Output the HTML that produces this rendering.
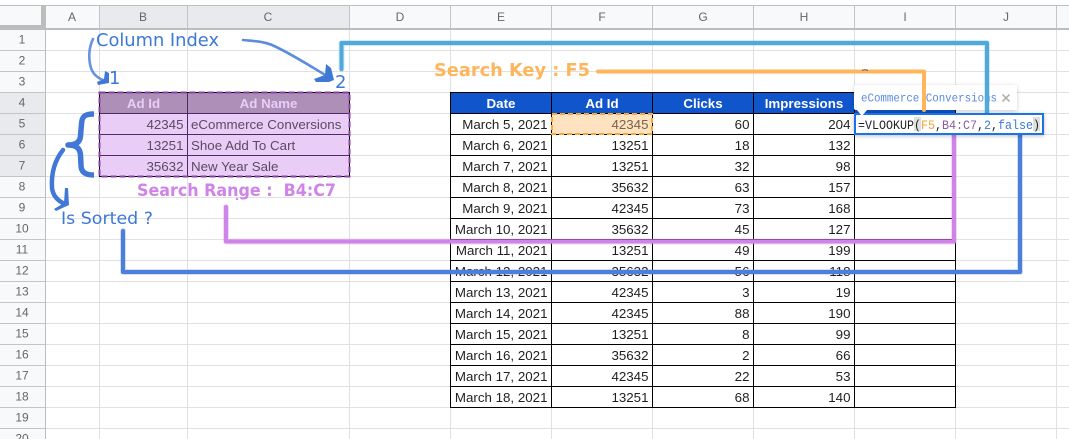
<!DOCTYPE html>
<html><head><meta charset="utf-8">
<style>
html,body{margin:0;padding:0;background:#fff;width:1069px;height:439px;overflow:hidden}
svg{display:block}
text{font-family:"Liberation Sans",sans-serif}
.h text{font-size:12px;fill:#666;text-anchor:middle}
.c text{font-size:13.33px;fill:#1f1f1f;text-anchor:end}
.th text{font-size:13.33px;font-weight:bold;fill:#fff;text-anchor:middle}
</style></head><body>
<svg width="1069" height="439" viewBox="0 0 1069 439" xmlns="http://www.w3.org/2000/svg">
<rect width="1069" height="439" fill="#fff"/>
<!-- header backgrounds -->
<rect x="0" y="5" width="1069" height="24" fill="#f8f9fa"/>
<rect x="0" y="29" width="45" height="410" fill="#f8f9fa"/>
<rect x="100" y="5" width="250" height="24" fill="#e8eaed"/>
<rect x="0" y="93" width="45" height="84" fill="#e8eaed"/>
<!-- grid -->
<path fill="none" stroke="#e1e1e1" d="M45 50.5H1069M45 71.5H1069M45 92.5H1069M45 113.5H1069M45 134.5H1069M45 155.5H1069M45 176.5H1069M45 197.5H1069M45 218.5H1069M45 239.5H1069M45 260.5H1069M45 281.5H1069M45 302.5H1069M45 323.5H1069M45 344.5H1069M45 365.5H1069M45 386.5H1069M45 407.5H1069M45 428.5H1069M99.5 29V439M187.5 29V439M349.5 29V439M450.5 29V439M551.5 29V439M652.5 29V439M753.5 29V439M854.5 29V439M955.5 29V439M1056.5 29V439"/>
<path fill="none" stroke="#c4c4c4" d="M0 50.5H45M0 71.5H45M0 92.5H45M0 113.5H45M0 134.5H45M0 155.5H45M0 176.5H45M0 197.5H45M0 218.5H45M0 239.5H45M0 260.5H45M0 281.5H45M0 302.5H45M0 323.5H45M0 344.5H45M0 365.5H45M0 386.5H45M0 407.5H45M0 428.5H45M99.5 5V29M187.5 5V29M349.5 5V29M450.5 5V29M551.5 5V29M652.5 5V29M753.5 5V29M854.5 5V29M955.5 5V29M1056.5 5V29"/>
<path fill="none" stroke="#bdbdbd" d="M0 5.5H1069M45.5 5V439"/>
<path fill="none" stroke="#bdbdbd" stroke-width="2" d="M0 29H1069"/>
<path fill="none" stroke="#bdbdbd" stroke-width="4" d="M43 5V29M0 27H45"/>
<g class="h">
<text x="72" y="21">A</text><text x="143" y="21">B</text><text x="268" y="21">C</text><text x="400" y="21">D</text><text x="501" y="21">E</text><text x="602" y="21">F</text><text x="703" y="21">G</text><text x="804" y="21">H</text><text x="905" y="21">I</text><text x="1006" y="21">J</text>
<text x="22" y="43.5">1</text><text x="22" y="64.5">2</text><text x="22" y="85.5">3</text><text x="22" y="106.5">4</text><text x="22" y="127.5">5</text><text x="22" y="148.5">6</text><text x="22" y="169.5">7</text><text x="22" y="190.5">8</text><text x="22" y="211.5">9</text><text x="22" y="232.5">10</text><text x="22" y="253.5">11</text><text x="22" y="274.5">12</text><text x="22" y="295.5">13</text><text x="22" y="316.5">14</text><text x="22" y="337.5">15</text><text x="22" y="358.5">16</text><text x="22" y="379.5">17</text><text x="22" y="400.5">18</text><text x="22" y="421.5">19</text><text x="22" y="442.5">20</text>
</g>
<!-- left table -->
<rect x="100" y="93" width="250" height="21" fill="#ae8fb8"/>
<rect x="100" y="114" width="250" height="63" fill="#e9cdf6"/>
<path fill="none" stroke="#4d2b66" d="M100 113.5H350M100 134.5H350M100 155.5H350M187.5 93V177"/>
<rect x="99.5" y="92.5" width="250" height="84" fill="none" stroke="#000"/>
<rect x="99.5" y="92.5" width="250" height="84" fill="none" stroke="#8a3fa6" stroke-width="2" stroke-dasharray="6 3"/>
<g style="font-size:13.33px;font-weight:bold;fill:#e9cdf6;text-anchor:middle"><text x="143.5" y="108">Ad Id</text><text x="268.5" y="108">Ad Name</text></g>
<g style="font-size:13.33px;fill:#5b4a63;text-anchor:end"><text x="183.5" y="129">42345</text><text x="183.5" y="150">13251</text><text x="183.5" y="171">35632</text></g>
<g style="font-size:13.33px;fill:#5b4a63"><text x="191" y="129">eCommerce Conversions</text><text x="191" y="150">Shoe Add To Cart</text><text x="191" y="171">New Year Sale</text></g>
<!-- right table -->
<rect x="451" y="93" width="505" height="21" fill="#1155cc"/>
<rect x="552" y="114" width="101" height="21" fill="#ffe2c0"/>
<path fill="none" stroke="#000" d="M450.5 92.5H955.5M450.5 113.5H955.5M450.5 134.5H955.5M450.5 155.5H955.5M450.5 176.5H955.5M450.5 197.5H955.5M450.5 218.5H955.5M450.5 239.5H955.5M450.5 260.5H955.5M450.5 281.5H955.5M450.5 302.5H955.5M450.5 323.5H955.5M450.5 344.5H955.5M450.5 365.5H955.5M450.5 386.5H955.5M450.5 407.5H955.5M450.5 92V408M551.5 92V408M652.5 92V408M753.5 92V408M854.5 92V408M955.5 92V408"/>
<rect x="552" y="114" width="100" height="20" fill="#ffe2c0" stroke="#ffa733" stroke-width="2" stroke-dasharray="5 3"/>
<g class="th"><text x="501" y="108">Date</text><text x="602" y="108">Ad Id</text><text x="703" y="108">Clicks</text><text x="804" y="108">Impressions</text></g>
<g class="c">
<text x="547.5" y="129">March 5, 2021</text><text x="547.5" y="150">March 6, 2021</text><text x="547.5" y="171">March 7, 2021</text><text x="547.5" y="192">March 8, 2021</text><text x="547.5" y="213">March 9, 2021</text><text x="547.5" y="234">March 10, 2021</text><text x="547.5" y="255">March 11, 2021</text><text x="547.5" y="276">March 12, 2021</text><text x="547.5" y="297">March 13, 2021</text><text x="547.5" y="318">March 14, 2021</text><text x="547.5" y="339">March 15, 2021</text><text x="547.5" y="360">March 16, 2021</text><text x="547.5" y="381">March 17, 2021</text><text x="547.5" y="402">March 18, 2021</text>
<text x="648.5" y="129" style="fill:#75654f">42345</text><text x="648.5" y="150">13251</text><text x="648.5" y="171">13251</text><text x="648.5" y="192">35632</text><text x="648.5" y="213">42345</text><text x="648.5" y="234">35632</text><text x="648.5" y="255">13251</text><text x="648.5" y="276">35632</text><text x="648.5" y="297">42345</text><text x="648.5" y="318">42345</text><text x="648.5" y="339">13251</text><text x="648.5" y="360">35632</text><text x="648.5" y="381">42345</text><text x="648.5" y="402">13251</text>
<text x="749.5" y="129">60</text><text x="749.5" y="150">18</text><text x="749.5" y="171">32</text><text x="749.5" y="192">63</text><text x="749.5" y="213">73</text><text x="749.5" y="234">45</text><text x="749.5" y="255">49</text><text x="749.5" y="276">56</text><text x="749.5" y="297">3</text><text x="749.5" y="318">88</text><text x="749.5" y="339">8</text><text x="749.5" y="360">2</text><text x="749.5" y="381">22</text><text x="749.5" y="402">68</text>
<text x="850.5" y="129">204</text><text x="850.5" y="150">132</text><text x="850.5" y="171">98</text><text x="850.5" y="192">157</text><text x="850.5" y="213">168</text><text x="850.5" y="234">127</text><text x="850.5" y="255">199</text><text x="850.5" y="276">118</text><text x="850.5" y="297">19</text><text x="850.5" y="318">190</text><text x="850.5" y="339">99</text><text x="850.5" y="360">66</text><text x="850.5" y="381">53</text><text x="850.5" y="402">140</text>
</g>
<!-- tooltip -->
<rect x="854" y="85" width="163" height="25" rx="2" fill="#fff" style="filter:drop-shadow(0 1px 2px rgba(0,0,0,.2))"/>
<text x="861" y="101.5" textLength="136" lengthAdjust="spacingAndGlyphs" style="font-family:'Liberation Mono',monospace;font-size:12px;fill:#5a8ae0">eCommerce Conversions</text>
<path d="M1002.5 94.5L1009.5 101.5M1009.5 94.5L1002.5 101.5" stroke="#aaa" stroke-width="1.5" fill="none"/>
<!-- connector lines -->
<g fill="none" stroke-linejoin="round" stroke-linecap="round">
<path d="M341.5 69V43H987V113" stroke="#4fa9da" stroke-width="6" stroke-opacity=".25"/>
<path d="M341.5 69V43H987V113" stroke="#4fa9da" stroke-width="4"/>
<path d="M598 71.5H924V110" stroke="#ffb55c" stroke-width="4"/>
<path d="M226 207V241.5H954V133" stroke="#d083e8" stroke-width="6" stroke-opacity=".3"/>
<path d="M226 207V241.5H954V133" stroke="#d083e8" stroke-width="4"/>
<path d="M123 231V272H1020V133" stroke="#4a7fdc" stroke-width="6" stroke-opacity=".25"/>
<path d="M123 231V272H1020V133" stroke="#4a7fdc" stroke-width="4"/>
</g>
<!-- formula box -->
<rect x="855" y="114" width="188" height="20" fill="#fff" stroke="#1a73e8" stroke-width="2" style="filter:drop-shadow(0 1px 2px rgba(0,0,0,.25))"/>
<rect x="914" y="117" width="7" height="14" fill="#e0e0e0"/><rect x="1033" y="117" width="7" height="14" fill="#e0e0e0"/>
<path d="M857 110H867L862 116Z" fill="#fff"/>
<text x="858" y="129" textLength="182" lengthAdjust="spacingAndGlyphs" style="font-family:'Liberation Mono',monospace;font-size:13.33px;fill:#222">=VLOOKUP(<tspan fill="#f6a33b">F5</tspan>,<tspan fill="#8e5aa8">B4:C7</tspan>,<tspan fill="#3c78d8">2</tspan>,<tspan fill="#3c78d8">false</tspan>)</text>
<!-- arrows and labels -->
<g fill="none" stroke="#4178d8" stroke-linecap="round" stroke-linejoin="round">
<path d="M93 39C89 47 88 58 91 68C93 74 98 78 103 80" stroke-width="2.6" stroke-opacity=".8"/>
<path d="M243 40C252 41 262 41 272 45C290 53 310 66 327 76" stroke-width="2.6" stroke-opacity=".85"/>
<path d="M94 114C85 114 82 116 81.5 124L80.5 136C80 142 76 145 68 145C76 145 80 148 80.5 155L81 165C81 172 85 175 94 175" stroke-width="5.5" stroke-linecap="butt"/>
<path d="M63 150C55 160 51 172 52 188C53 196 58 201 65 204" stroke-width="4.5"/>
</g>
<path d="M105 71L109 73L109 83L98 85L97 82L104 79Z" fill="#4178d8"/>
<path d="M326 64L331 68L334 80L329 82L316 82L314 79L325 75Z" fill="#4178d8"/>
<path d="M65 188L68 188L69 205L56 211L54 209L64 203Z" fill="#4178d8"/>
<text x="96" y="46" textLength="123" lengthAdjust="spacingAndGlyphs" style="font-family:'DejaVu Sans',sans-serif;font-size:18px;fill:#3c78d8">Column Index</text>
<text x="109" y="84" style="font-family:'DejaVu Sans',sans-serif;font-size:18px;fill:#3c78d8">1</text>
<text x="335" y="88" style="font-family:'DejaVu Sans',sans-serif;font-size:18px;fill:#3c78d8">2</text>
<text x="61" y="224" textLength="92" lengthAdjust="spacingAndGlyphs" style="font-family:'DejaVu Sans',sans-serif;font-size:17px;fill:#3c78d8">Is Sorted ?</text>
<text x="137" y="196" textLength="199" lengthAdjust="spacingAndGlyphs" xml:space="preserve" style="font-family:'DejaVu Sans',sans-serif;font-size:16.5px;font-weight:bold;fill:#d083e8">Search Range :  B4:C7</text>
<text x="434" y="76" textLength="156" lengthAdjust="spacingAndGlyphs" style="font-family:'DejaVu Sans',sans-serif;font-size:17.5px;font-weight:bold;fill:#ffb55c">Search Key : F5</text>
<circle cx="237" cy="199" r="1.2" fill="#d083e8"/>
<path d="M862 70.5Q865 69 868 70.5" stroke="#555" fill="none"/>
</svg>
</body></html>
